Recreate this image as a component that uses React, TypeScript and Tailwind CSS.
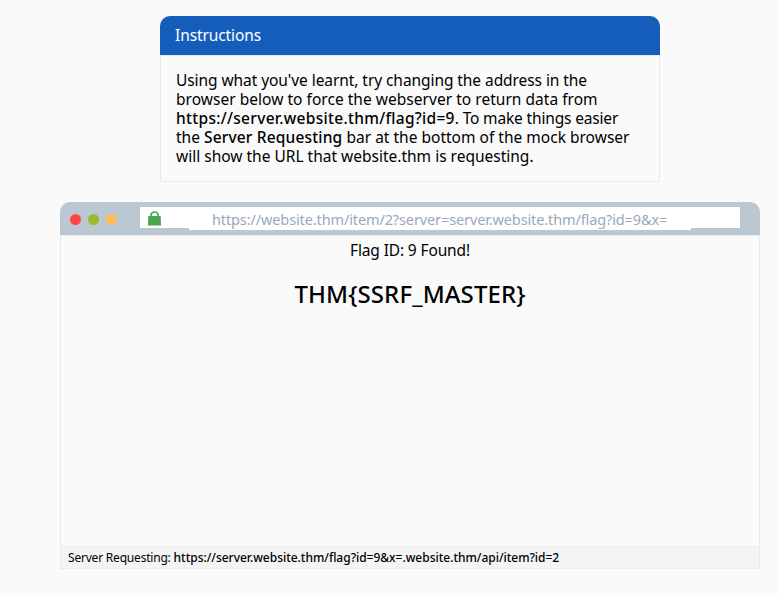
import React from "react";

function Instructions() {
  return (
    <section className="h-[166px] w-[500px]">
      <header className="flex h-[39px] items-center rounded-t-[10px] bg-[#145dbb] pl-[15px] text-white">
        <span className="text-[15.5px] leading-[19px] tracking-[-0.1px]">Instructions</span>
      </header>
      <div className="h-[127px] border border-[#ebebeb] px-[15px] pt-[15px] text-[15.5px] leading-[19px] whitespace-pre">
        <p className="tracking-[-0.07px]">Using what you've learnt, try changing the address in the</p>
        <p className="tracking-[0.03px]">browser below to force the webserver to return data from</p>
        <p className="flex">
          <b className="font-medium tracking-[0.3px]">https://server.website.thm/flag?id=9</b>
          <span className="tracking-[-0.16px]">. To make things easier</span>
        </p>
        <p className="flex">
          <span>the </span>
          <b className="font-medium tracking-[0.17px]">Server Requesting</b>
          <span className="tracking-[0.01px]"> bar at the bottom of the mock browser</span>
        </p>
        <p>will show the URL that website.thm is requesting.</p>
      </div>
    </section>
  );
}

function Lock() {
  return (
    <svg className="ml-2 mt-[4px] h-[15px] w-[13px]" viewBox="0 0 13 15">
      <path d="M3 6V4.3a3.5 3.3 0 0 1 7 0V6" fill="none" stroke="#4da54f" strokeWidth="1.7" />
      <path d="M0.3 4.9h12.4L13 14.6H0z" fill="#4da54f" />
    </svg>
  );
}

function Browser() {
  return (
    <section className="mt-5 ml-[60px] h-[367px] w-[700px]">
      <header className="flex h-[33px] rounded-t-[10px] bg-[#bbc7d1]">
        <div className="flex w-20 items-center gap-[7px] pt-[2px] pl-[10px]">
          <i className="size-[11px] rounded-full bg-[#ff4645]" />
          <i className="size-[11px] rounded-full bg-[#9aba30]" />
          <i className="size-[11px] rounded-full bg-[#ffbb57]" />
        </div>
        <div className="mt-[5px] flex h-[21px] w-[600px] bg-white">
          <div className="w-[49px]"><Lock /></div>
          <div className="h-[23px] w-[502px] bg-white pt-[2px] pl-[23px] text-[14.5px] leading-[21px] tracking-[-0.12px] whitespace-nowrap text-[#99a9b9]">
            https://website.thm/item/2?server=server.website.thm/flag?id=9&amp;x=
          </div>
        </div>
      </header>
      <div className="h-[311px] border-x border-t border-[#ebebeb] text-center">
        <p className="pt-[5px] text-[15.5px] leading-[19px] tracking-[-0.13px]">Flag ID: 9 Found!</p>
        <h1 className="mt-[19px] text-[24px] leading-[30px] font-medium tracking-[0.1px]">THM&#123;SSRF_MASTER&#125;</h1>
      </div>
      <footer className="flex h-[23px] border border-[#ebebeb] bg-[#f4f4f4] pl-[7px] text-[12px] leading-[21px] whitespace-pre">
        <span className="tracking-[-0.2px]">{"Server Requesting: "}</span>
        <b className="font-medium tracking-[-0.02px]">https://server.website.thm/flag?id=9&amp;x=.website.thm/api/item?id=2</b>
      </footer>
    </section>
  );
}

export default function App() {
  return (
    <main className="h-[596px] w-[777px] overflow-hidden bg-[#fafafa] pt-4 font-['Noto_Sans',sans-serif] text-black">
      <div className="ml-[160px]"><Instructions /></div>
      <Browser />
    </main>
  );
}
